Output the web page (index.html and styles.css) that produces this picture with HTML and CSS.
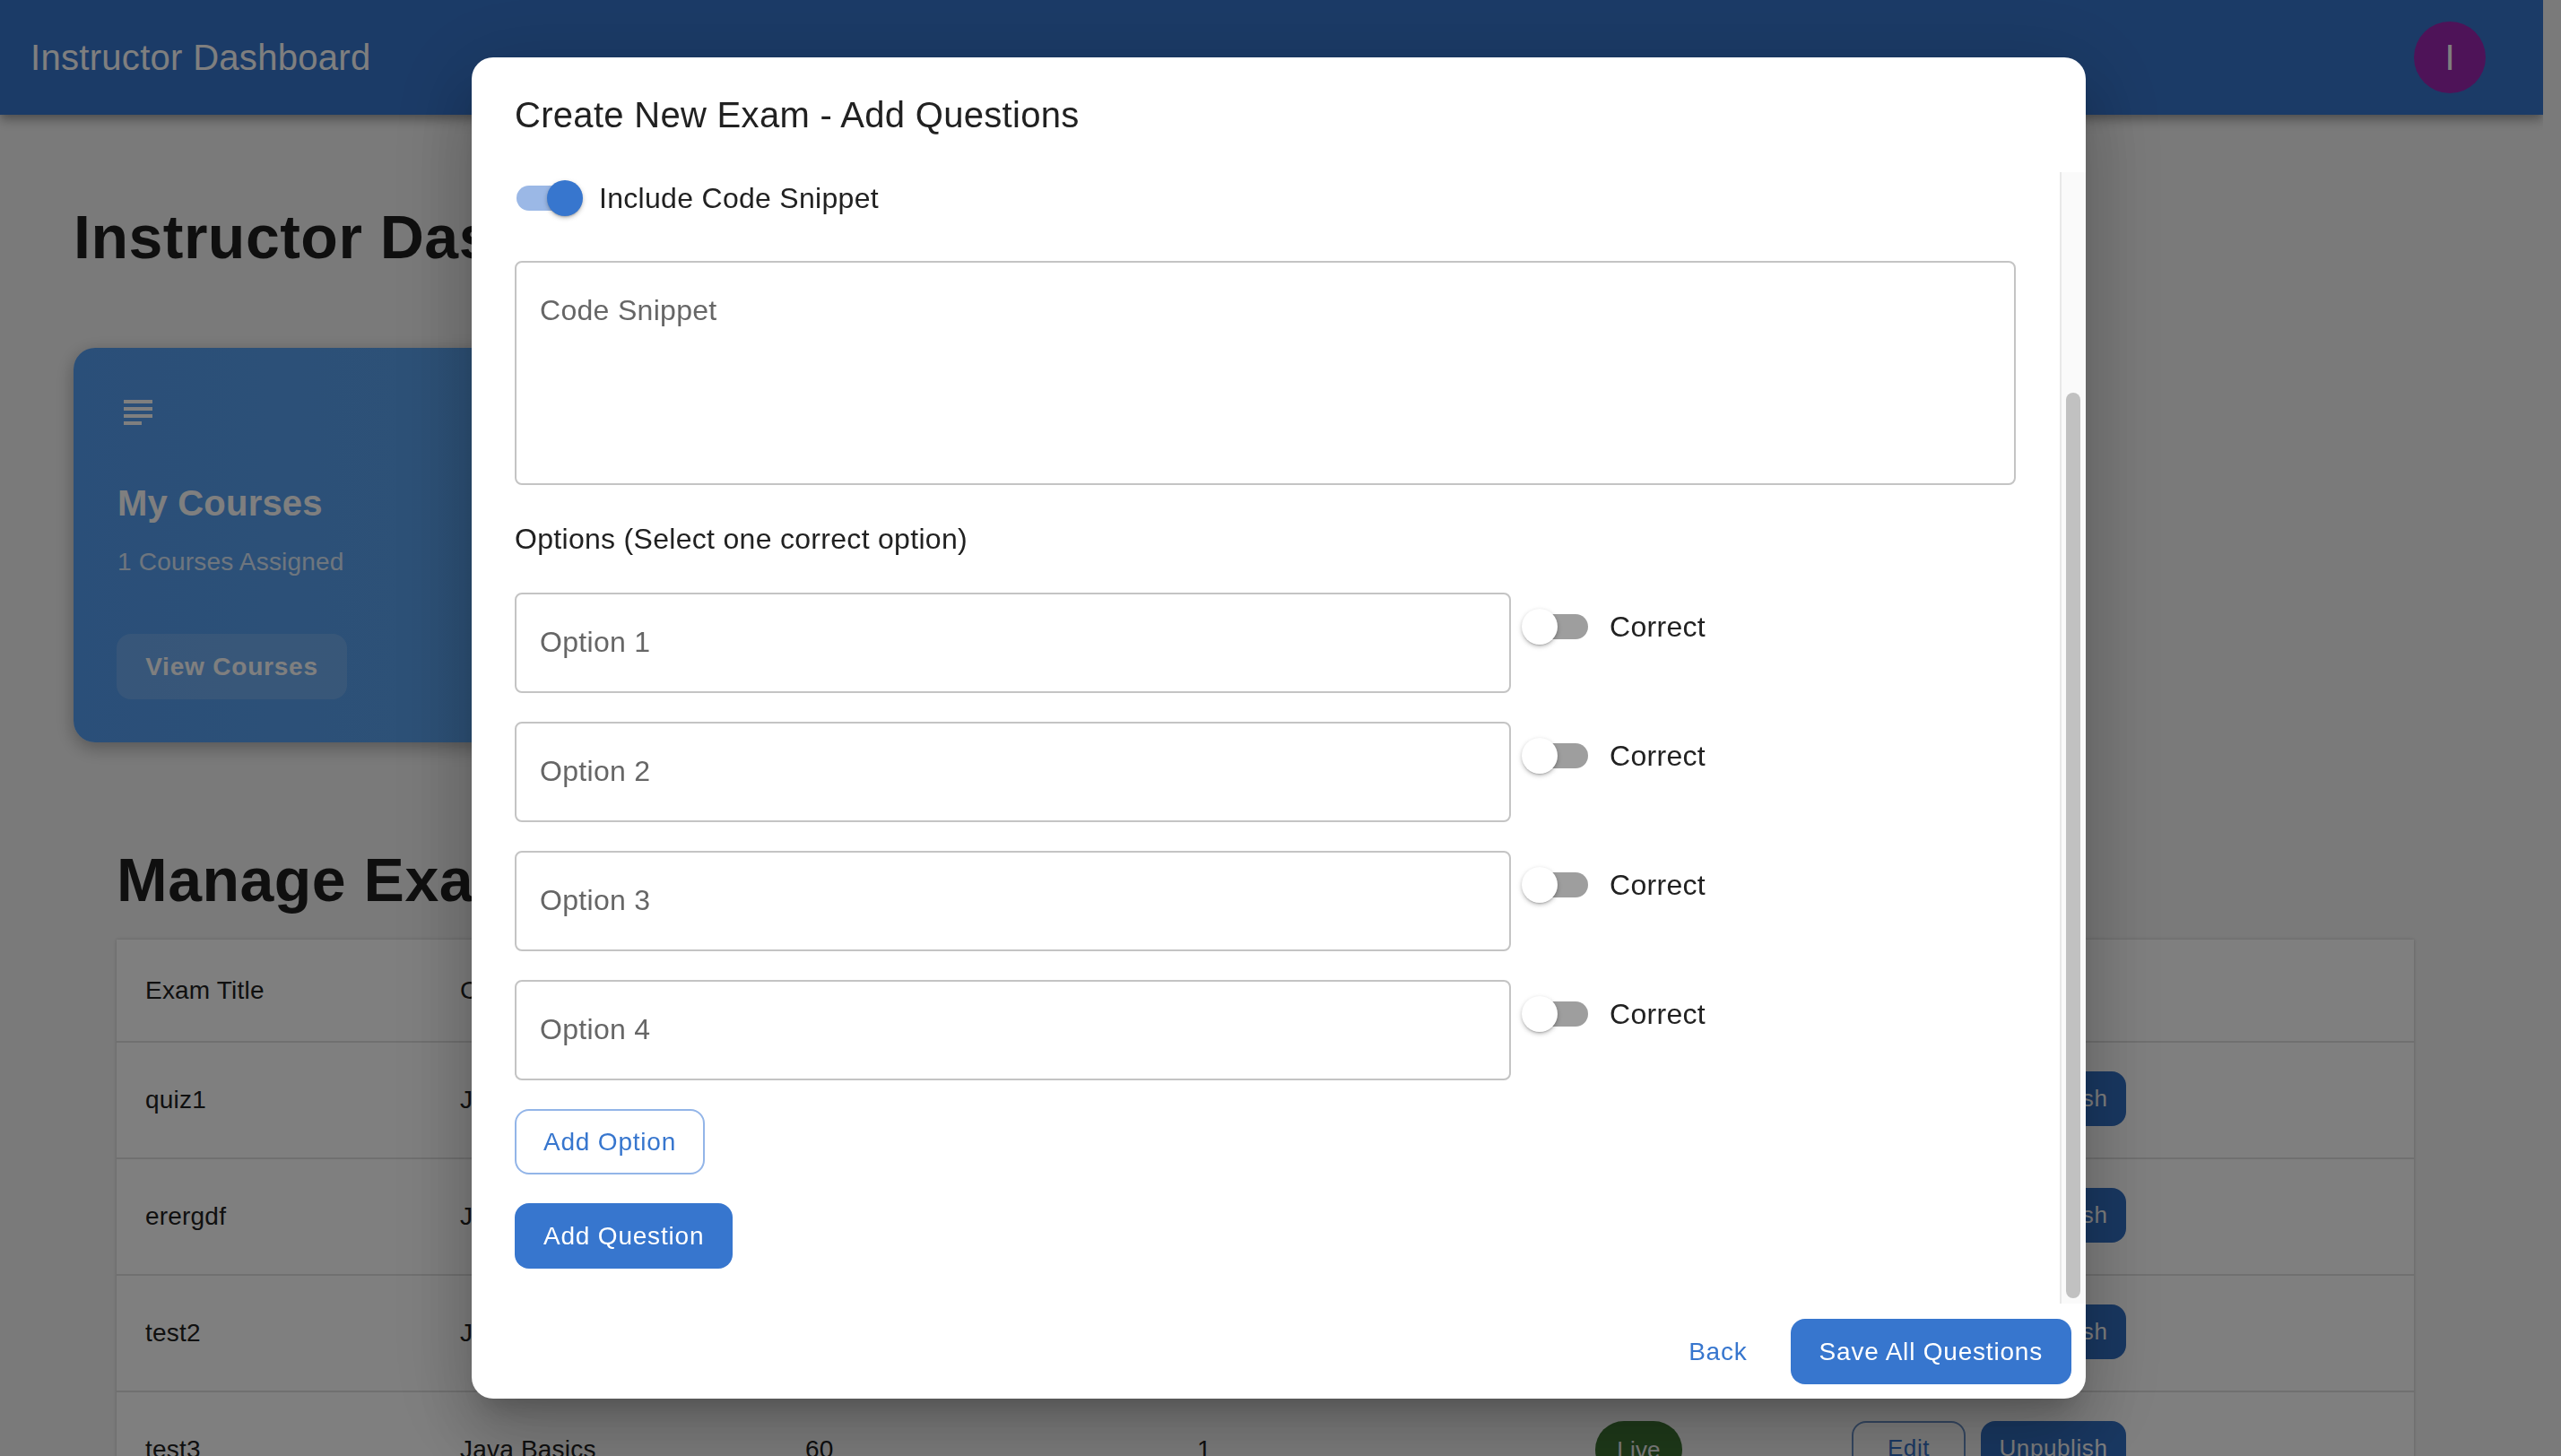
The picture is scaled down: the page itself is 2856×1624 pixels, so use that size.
FILE: index.html
```html
<!DOCTYPE html>
<html lang="en">
<head>
	<meta charset="UTF-8">
	<title>Instructor Dashboard</title>
	<link rel="stylesheet" href="styles.css">
</head>
<body>
	<div class="page">
		<header class="appbar">
			<div class="appbar-title">Instructor Dashboard</div>
			<div class="avatar">I</div>
		</header>

		<main class="main">
			<h1 class="page-title">Instructor Dashboard</h1>

			<div class="card">
				<svg class="card-icon" viewBox="0 0 24 24"><path d="M14 17H4v2h10v-2zm6-8H4v2h16V9zM4 15h16v-2H4v2zM4 5v2h16V5H4z"/></svg>
				<h2 class="card-title">My Courses</h2>
				<p class="card-text">1 Courses Assigned</p>
				<a class="card-btn">View Courses</a>
			</div>

			<section class="exams">
				<h1 class="page-title">Manage Exams</h1>
				<table class="exam-table">
					<colgroup>
						<col class="col-title"><col class="col-course"><col class="col-duration">
						<col class="col-questions"><col class="col-status"><col class="col-actions">
					</colgroup>
					<thead>
						<tr><th>Exam Title</th><th>Course</th><th>Duration</th><th>Questions</th><th>Status</th><th>Actions</th></tr>
					</thead>
					<tbody>
						<tr>
							<td>quiz1</td><td>Java Basics</td><td>60</td><td>1</td>
							<td><span class="chip">Live</span></td>
							<td><div class="actions"><a class="btn-edit">Edit</a><a class="btn-unpub">Unpublish</a></div></td>
						</tr>
						<tr>
							<td>erergdf</td><td>Java Basics</td><td>60</td><td>1</td>
							<td><span class="chip">Live</span></td>
							<td><div class="actions"><a class="btn-edit">Edit</a><a class="btn-unpub">Unpublish</a></div></td>
						</tr>
						<tr>
							<td>test2</td><td>Java Basics</td><td>60</td><td>1</td>
							<td><span class="chip">Live</span></td>
							<td><div class="actions"><a class="btn-edit">Edit</a><a class="btn-unpub">Unpublish</a></div></td>
						</tr>
						<tr>
							<td>test3</td><td>Java Basics</td><td>60</td><td>1</td>
							<td><span class="chip">Live</span></td>
							<td><div class="actions"><a class="btn-edit">Edit</a><a class="btn-unpub">Unpublish</a></div></td>
						</tr>
					</tbody>
				</table>
			</section>
		</main>
	</div>

	<!-- dialog over the dashboard -->
	<div class="backdrop">
		<div class="dialog">
			<h2 class="dialog-title">Create New Exam - Add Questions</h2>

			<div class="dialog-body">
				<div class="dialog-content">
					<label class="snippet-toggle">
						<span class="switch on"><span class="track"></span><span class="thumb"></span></span>
						<span>Include Code Snippet</span>
					</label>

					<div class="field field-code">Code Snippet</div>

					<div class="options-label">Options (Select one correct option)</div>

					<div class="option-row">
						<div class="field field-option">Option 1</div>
						<label class="correct">
							<span class="switch"><span class="track"></span><span class="thumb"></span></span>
							<span>Correct</span>
						</label>
					</div>
					<div class="option-row">
						<div class="field field-option">Option 2</div>
						<label class="correct">
							<span class="switch"><span class="track"></span><span class="thumb"></span></span>
							<span>Correct</span>
						</label>
					</div>
					<div class="option-row">
						<div class="field field-option">Option 3</div>
						<label class="correct">
							<span class="switch"><span class="track"></span><span class="thumb"></span></span>
							<span>Correct</span>
						</label>
					</div>
					<div class="option-row">
						<div class="field field-option">Option 4</div>
						<label class="correct">
							<span class="switch"><span class="track"></span><span class="thumb"></span></span>
							<span>Correct</span>
						</label>
					</div>

					<div class="add-option"><a class="btn btn-outline">Add Option</a></div>
					<div><a class="btn btn-solid">Add Question</a></div>
				</div>
				<div class="scrollbar"><div class="scroll-thumb"></div></div>
			</div>

			<div class="dialog-actions">
				<a class="btn btn-text">Back</a>
				<a class="btn btn-solid">Save All Questions</a>
			</div>
		</div>
	</div>
</body>
</html>
```
FILE: styles.css
```css
* {
	box-sizing: border-box;
	margin: 0;
	padding: 0;
}

html, body {
	height: 100%;
	overflow: hidden;
}

body {
	background: #f5f5f5;
	font-family: "Liberation Sans", Arial, sans-serif;
	color: #212121;
}

.page {
	width: 2836px;
	height: 1624px;
	overflow: hidden;
}

/* top bar */
.appbar {
	height: 128px;
	background: #3776ce;
	color: #fff;
	display: flex;
	align-items: center;
	justify-content: space-between;
	padding: 0 64px 0 34px;
	box-shadow: 0 4px 8px -2px rgba(0,0,0,.2), 0 8px 10px 0 rgba(0,0,0,.14), 0 2px 20px 0 rgba(0,0,0,.12);
	position: relative;
}

.appbar-title {
	font-size: 40px;
	letter-spacing: .3px;
}

.avatar {
	width: 80px;
	height: 80px;
	border-radius: 50%;
	background: #9c27b0;
	display: flex;
	align-items: center;
	justify-content: center;
	font-size: 40px;
}

.main {
	padding: 94px 48px 0 82px;
}

.page-title {
	font-size: 68px;
	line-height: 84px;
	font-weight: 700;
	letter-spacing: .5px;
	color: #1f1f1f;
}

/* courses card */
.card {
	width: 730px;
	height: 440px;
	margin-top: 82px;
	padding: 48px;
	border-radius: 24px;
	background: linear-gradient(90deg, #559ef2, #5fa6ec);
	color: #fff;
	box-shadow: 0 6px 20px rgba(0,0,0,.3);
}

.card-icon {
	display: block;
	width: 48px;
	height: 48px;
	fill: #fff;
}

.card-title {
	font-size: 40px;
	line-height: 48px;
	font-weight: 700;
	letter-spacing: .2px;
	margin-top: 53px;
	margin-left: 1px;
}

.card-text {
	font-size: 28px;
	letter-spacing: .2px;
	line-height: 44px;
	margin-top: 20px;
	margin-left: 1px;
	opacity: .8;
}

.card-btn {
	display: inline-block;
	width: 257px;
	height: 73px;
	line-height: 73px;
	margin-top: 58px;
	text-align: center;
	font-size: 28px;
	font-weight: 700;
	letter-spacing: .8px;
	background: rgba(255,255,255,.15);
	border-radius: 16px;
}

/* exam table */
.exams {
	margin-top: 111px;
	padding-left: 48px;
}

.exam-table {
	width: 2562px;
	margin-top: 25px;
	table-layout: fixed;
	border-collapse: collapse;
	background: #fff;
	font-size: 28px;
	letter-spacing: .2px;
	color: #212121;
	box-shadow: 0 0 4px rgba(0,0,0,.2);
}

.col-title { width: 351px; }
.col-course { width: 385px; }
.col-duration { width: 437px; }
.col-questions { width: 444px; }
.col-status { width: 286px; }
.col-actions { width: 659px; }

.exam-table th {
	height: 114px;
	padding: 0 32px;
	font-weight: 400;
	text-align: left;
	border-bottom: 2px solid #e0e0e0;
}

.exam-table td {
	height: 130px;
	padding: 0 32px;
	border-bottom: 2px solid #e0e0e0;
	white-space: nowrap;
}

.chip {
	display: inline-block;
	width: 97px;
	height: 64px;
	line-height: 64px;
	text-align: center;
	border-radius: 32px;
	background: #3e7534;
	color: #fff;
	font-size: 26px;
}

.actions {
	display: flex;
	gap: 17px;
	margin-top: -3px;
}

.btn-edit, .btn-unpub {
	height: 61px;
	line-height: 61px;
	font-size: 26px;
	letter-spacing: .6px;
	border-radius: 16px;
	text-align: center;
}

.btn-edit {
	width: 127px;
	line-height: 57px;
	border: 2px solid #6d93c9;
	color: #3776ce;
}

.btn-unpub {
	width: 162px;
	background: #3270c4;
	color: #fff;
}

/* dialog */
.backdrop {
	position: fixed;
	top: 0;
	left: 0;
	right: 0;
	bottom: 0;
	background: rgba(0,0,0,.5);
	padding: 64px 0 0 526px;
}

.dialog {
	width: 1800px;
	height: 1496px;
	background: #fff;
	border-radius: 24px;
	display: flex;
	flex-direction: column;
	box-shadow: 0 22px 30px -14px rgba(0,0,0,.2), 0 48px 76px 6px rgba(0,0,0,.14), 0 18px 92px 16px rgba(0,0,0,.12);
}

.dialog-title {
	height: 128px;
	padding: 32px 48px;
	font-size: 40px;
	line-height: 64px;
	font-weight: 400;
	letter-spacing: .3px;
	color: #212121;
}

.dialog-body {
	flex: 1;
	display: flex;
	min-height: 0;
}

.dialog-content {
	flex: 1;
	padding-left: 48px;
	overflow: hidden;
	font-size: 32px;
	letter-spacing: .3px;
}

.scrollbar {
	width: 29px;
	padding-left: 5px;
	background: #fafafa;
	border-left: 2px solid #e8e8e8;
}

.scroll-thumb {
	width: 16px;
	height: 1010px;
	margin-top: 246px;
	border-radius: 8px;
	background: #c1c1c1;
}

.dialog-actions {
	height: 106px;
	padding: 17px 16px 16px;
	display: flex;
	justify-content: flex-end;
	gap: 32px;
}

/* switches */
.switch {
	display: block;
	flex: none;
	width: 116px;
	height: 76px;
	padding: 24px;
	position: relative;
}

.track {
	display: block;
	width: 68px;
	height: 28px;
	border-radius: 14px;
	background: #9e9e9e;
}

.thumb {
	position: absolute;
	top: 18px;
	left: 18px;
	width: 40px;
	height: 40px;
	border-radius: 50%;
	background: #fff;
	box-shadow: 0 2px 2px -1px rgba(0,0,0,.2), 0 2px 4px 0 rgba(0,0,0,.14), 0 2px 6px 0 rgba(0,0,0,.12);
}

.switch.on .track {
	background: #9bb8e6;
}

.switch.on .thumb {
	left: 58px;
	background: #3776ce;
}

.snippet-toggle {
	display: flex;
	align-items: center;
	height: 58px;
	margin-left: -22px;
}

/* fields */
.field {
	border: 2px solid #c4c4c4;
	border-radius: 8px;
	color: #666;
	padding: 0 26px;
}

.field-code {
	width: 1674px;
	height: 250px;
	margin-top: 41px;
	padding-top: 29px;
	line-height: 48px;
}

.options-label {
	margin-top: 36px;
	margin-bottom: 36px;
	line-height: 48px;
}

.option-row {
	display: flex;
	align-items: flex-start;
	height: 112px;
	margin-bottom: 32px;
}

.field-option {
	width: 1111px;
	height: 112px;
	line-height: 106px;
}

.correct {
	display: flex;
	align-items: center;
	height: 76px;
	margin-left: -6px;
}

/* buttons */
.add-option {
	margin-bottom: 32px;
}

.btn {
	display: inline-block;
	height: 73px;
	line-height: 73px;
	padding: 0 32px;
	font-size: 28px;
	letter-spacing: .8px;
	border-radius: 16px;
	white-space: nowrap;
}

.btn-outline {
	line-height: 69px;
	border: 2px solid #93b5e8;
	color: #3776ce;
	padding: 0 30px;
}

.btn-solid {
	background: #3776ce;
	color: #fff;
}

.btn-text {
	color: #3776ce;
	padding: 0 16px;
}
```
